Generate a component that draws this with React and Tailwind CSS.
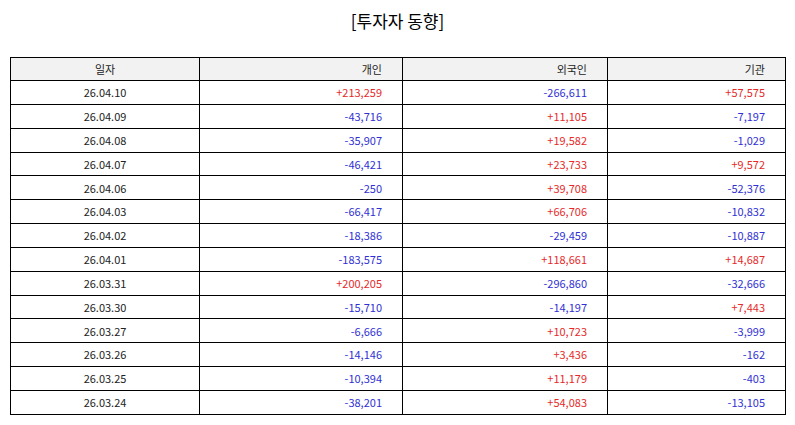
import React from 'react';

// investor flow rows: date, individual, foreign, institution
const rows = [
  ['26.04.10', '+213,259', '-266,611', '+57,575'],
  ['26.04.09', '-43,716', '+11,105', '-7,197'],
  ['26.04.08', '-35,907', '+19,582', '-1,029'],
  ['26.04.07', '-46,421', '+23,733', '+9,572'],
  ['26.04.06', '-250', '+39,708', '-52,376'],
  ['26.04.03', '-66,417', '+66,706', '-10,832'],
  ['26.04.02', '-18,386', '-29,459', '-10,887'],
  ['26.04.01', '-183,575', '+118,661', '+14,687'],
  ['26.03.31', '+200,205', '-296,860', '-32,666'],
  ['26.03.30', '-15,710', '-14,197', '+7,443'],
  ['26.03.27', '-6,666', '+10,723', '-3,999'],
  ['26.03.26', '-14,146', '+3,436', '-162'],
  ['26.03.25', '-10,394', '+11,179', '-403'],
  ['26.03.24', '-38,201', '+54,083', '-13,105'],
];

const Value = ({ v }) => (
  <td className={`border border-black text-right pr-[20px] ${v.startsWith('+') ? 'text-[#e62a2a]' : 'text-[#3030d4]'}`}>
    {v}
  </td>
);

export default function App() {
  return (
    <div
      className="w-[795px] h-[425px] bg-white px-[10px] text-[11px] text-[#222]"
      style={{ fontFamily: '"Noto Sans CJK KR", "Noto Sans", sans-serif' }}
    >
      <div className="h-[57px] pt-[9px] text-center text-[17px] leading-[24px] text-black">[투자자 동향]</div>
      <table className="w-[775px] border-collapse table-fixed">
        <colgroup>
          <col className="w-[189px]" />
          <col className="w-[203px]" />
          <col className="w-[205px]" />
          <col className="w-[178px]" />
        </colgroup>
        <thead>
          <tr className="h-[23px] bg-[#f2f2f2]">
            <th className="border border-black font-normal text-center">일자</th>
            <th className="border border-black font-normal text-right pr-[20px]">개인</th>
            <th className="border border-black font-normal text-right pr-[20px]">외국인</th>
            <th className="border border-black font-normal text-right pr-[20px]">기관</th>
          </tr>
        </thead>
        <tbody>
          {rows.map((r) => (
            <tr key={r[0]} className="h-[23.85px]">
              <td className="border border-black text-center">{r[0]}</td>
              <Value v={r[1]} />
              <Value v={r[2]} />
              <Value v={r[3]} />
            </tr>
          ))}
        </tbody>
      </table>
    </div>
  );
}
